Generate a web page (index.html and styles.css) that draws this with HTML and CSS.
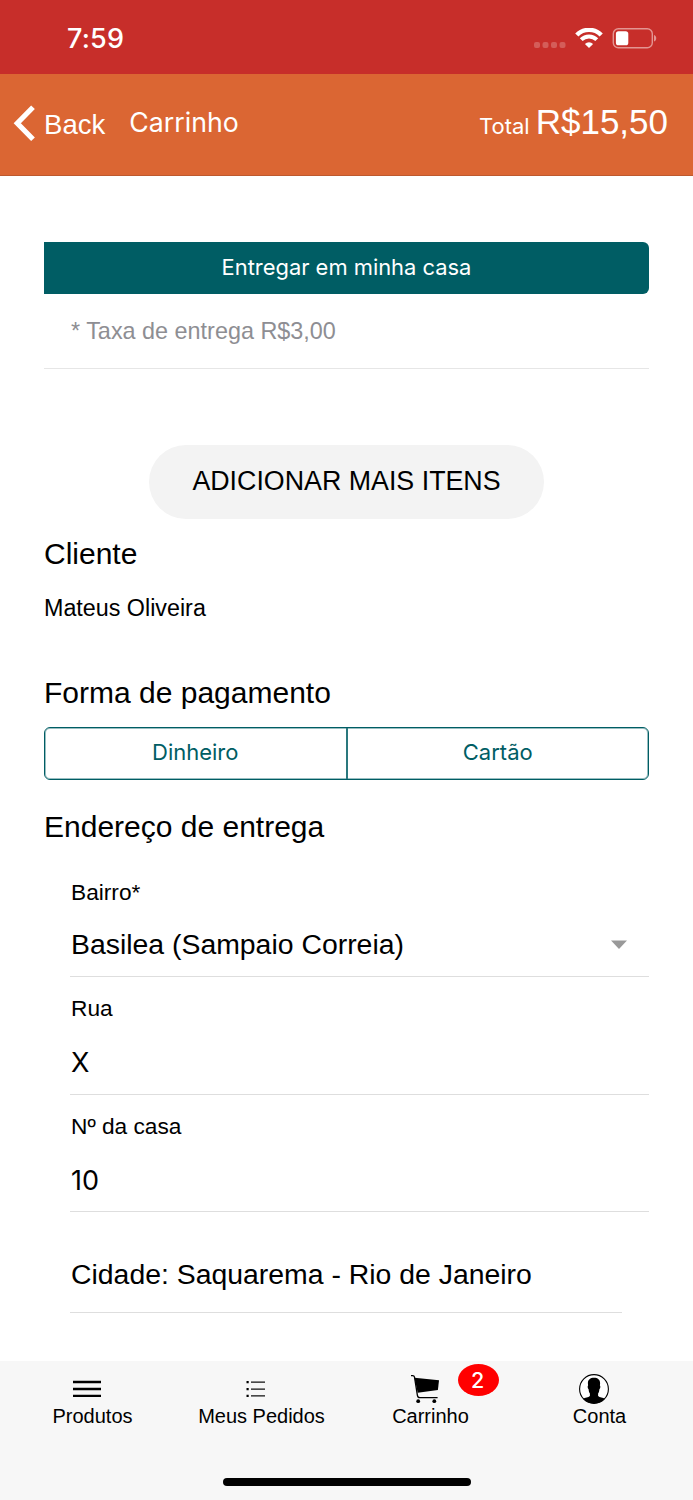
FILE: index.html
```html
<!DOCTYPE html>
<html lang="pt-BR">
<head>
    <meta charset="UTF-8">
    <meta name="viewport" content="width=device-width, initial-scale=1.0">
    <title>Carrinho</title>
    <link rel="stylesheet" href="styles.css">
</head>
<body>
    <!-- Status bar -->
    <div class="status-bar">
        <span class="time">7:59</span>
        <div class="status-icons">
            <svg class="signal" width="32" height="6" viewBox="0 0 32 6">
                <rect x="0" y="0" width="6" height="6" rx="2"/>
                <rect x="8.5" y="0" width="6" height="6" rx="2"/>
                <rect x="17" y="0" width="6" height="6" rx="2"/>
                <rect x="25.5" y="0" width="6" height="6" rx="2"/>
            </svg>
            <svg class="wifi" width="28" height="20" viewBox="0 0 28 20">
                <path d="M1.8 7A17 17 0 0 1 26.2 7" fill="none" stroke="#fff" stroke-width="4.4"/>
                <path d="M6.2 11.7A11 11 0 0 1 21.8 11.7" fill="none" stroke="#fff" stroke-width="4"/>
                <path d="M14 20L9.9 15.9A6.2 6.2 0 0 1 18.1 15.9Z" fill="#fff"/>
            </svg>
            <svg class="battery" width="45" height="21" viewBox="0 0 45 21">
                <rect x="1.3" y="0.8" width="39" height="19" rx="5" fill="none" stroke="#e39592" stroke-width="1.4"/>
                <rect x="3.9" y="3.3" width="12.4" height="14" rx="2.6" fill="#fff"/>
                <path d="M42 7C45 8 45 12.6 42 13.6Z" fill="#e39592"/>
            </svg>
        </div>
    </div>

    <!-- Header -->
    <div class="navbar">
        <button class="back-btn">
            <svg width="22" height="36" viewBox="0 0 22 36">
                <path d="M20 2.2L4.3 18.2L20 34.2" fill="none" stroke="#fff" stroke-width="5.2"/>
            </svg>
            <span class="back-text">Back</span>
        </button>
        <span class="nav-title">Carrinho</span>
        <div class="total"><span class="total-label">Total</span><span class="total-value">R$15,50</span></div>
    </div>

    <div class="content">
        <button class="deliver-btn"><span>Entregar em minha casa</span></button>
        <p class="fee"><span>* Taxa de entrega R$3,00</span></p>

        <button class="add-btn"><span>ADICIONAR MAIS ITENS</span></button>

        <h2 class="client-title"><span>Cliente</span></h2>
        <p class="client-name"><span>Mateus Oliveira</span></p>

        <h2 class="payment-title"><span>Forma de pagamento</span></h2>
        <div class="payment">
            <button class="payment-btn"><span>Dinheiro</span></button>
            <button class="payment-btn"><span>Cartão</span></button>
        </div>

        <h2 class="address-title"><span>Endereço de entrega</span></h2>
        <div class="address">
            <div class="field">
                <span class="field-label">Bairro*</span>
                <div class="field-value">
                    <span>Basilea (Sampaio Correia)</span>
                    <svg width="16" height="9" viewBox="0 0 16 9"><path d="M0 .5H16L8 9Z" fill="#999"/></svg>
                </div>
            </div>
            <div class="field">
                <span class="field-label">Rua</span>
                <div class="field-value field-input"><span>X</span></div>
            </div>
            <div class="field">
                <span class="field-label">Nº da casa</span>
                <div class="field-value field-input"><span>10</span></div>
            </div>
            <p class="city"><span>Cidade: Saquarema - Rio de Janeiro</span></p>
        </div>
    </div>

    <!-- Bottom tabs -->
    <div class="tab-bar">
        <div class="tabs">
            <div class="tab tab-products">
                <svg width="28" height="30" viewBox="0 0 28 30">
                    <path d="M0 8H28M0 15H28M0 21.8H28" stroke="#000" stroke-width="2.3"/>
                </svg>
                <span>Produtos</span>
            </div>
            <div class="tab tab-orders">
                <svg width="20" height="30" viewBox="0 0 20 30">
                    <path d="M5 8.2H19M5 15.2H19M5 21.9H19" stroke="#111" stroke-width="1.3"/>
                    <path d="M.5 8.2H2.7M.5 15.2H2.7M.5 21.9H2.7" stroke="#000" stroke-width="2.2"/>
                </svg>
                <span>Meus Pedidos</span>
            </div>
            <div class="tab tab-cart">
                <div class="cart-icon">
                    <svg width="28" height="30" viewBox="0 0 28 30">
                        <path d="M0 1.6H1.7Q3.2 1.6 3.5 3.2L6.4 21.3Q6.8 23.6 8.8 23.6H26.6" fill="none" stroke="#000" stroke-width="1.3"/>
                        <path d="M3.5 3.7L28 6.3L26.9 16L6.7 18.7Z"/>
                        <circle cx="7.2" cy="27.2" r="1.9"/>
                        <circle cx="23.3" cy="27.2" r="1.9"/>
                    </svg>
                    <span class="badge">2</span>
                </div>
                <span>Carrinho</span>
            </div>
            <div class="tab tab-account">
                <svg width="30" height="30" viewBox="0 0 30 30">
                    <circle cx="15" cy="15" r="14.4" fill="#fff" stroke="#000" stroke-width="1.1"/>
                    <path d="M15 3.8C18.8 3.8 21.2 5.8 21.1 9.5L20.9 11.6C21.7 12 21.3 15 20.4 15.3C20.2 17.4 19.8 18.8 19.1 19.6V22C20.6 23.4 24 23.8 26 24.7C20.5 31 9.5 31 4 24.7C6 23.8 9.4 23.4 10.9 22V19.6C10.2 18.8 9.8 17.4 9.6 15.3C8.7 15 8.3 12 9.1 11.6L8.9 9.5C8.8 5.8 11.2 3.8 15 3.8Z"/>
                </svg>
                <span>Conta</span>
            </div>
        </div>
        <div class="home-indicator"></div>
    </div>
</body>
</html>
```
FILE: styles.css
```css
* {
    box-sizing: border-box;
}

body {
    margin: 0;
    height: 1500px;
    display: flex;
    flex-direction: column;
    background: #fff;
    color: #000;
    font-family: "Liberation Sans", Arial, sans-serif;
    white-space: nowrap;
}

h2, p {
    margin: 0;
    font-weight: normal;
}

button {
    border: none;
    padding: 0;
    margin: 0;
    background: none;
    font-family: inherit;
    cursor: pointer;
}

svg {
    display: block;
    flex-shrink: 0;
}

/* Status bar */
.status-bar {
    height: 74px;
    display: flex;
    justify-content: space-between;
    padding: 0 36px 0 67px;
    background: #c72e2a;
    color: #fff;
}

.time {
    font-family: Inter, sans-serif;
    font-size: 27px;
    font-weight: 500;
    line-height: 77px;
    letter-spacing: 0.2px;
}

.status-icons {
    display: flex;
    align-items: flex-start;
    padding-top: 28px;
}

.signal {
    margin: 14px 9px 0 0;
    fill: #d45d59;
}

.wifi {
    margin-right: 9px;
}

/* Header */
.navbar {
    height: 102px;
    display: flex;
    padding: 0 25px 0 13px;
    background: #db6633;
    border-bottom: 1px solid #bd592e;
    color: #fff;
}

.back-btn {
    display: flex;
    align-items: flex-start;
    color: #fff;
}

.back-btn svg {
    margin: 31px 9px 0 0;
}

.back-text {
    font-size: 27.6px;
    line-height: 101px;
}

.nav-title {
    margin-left: 24px;
    font-family: Inter, sans-serif;
    font-size: 26.7px;
    line-height: 97px;
}

.total {
    margin-left: auto;
    line-height: 95px;
}

.total-label {
    margin-right: 6px;
    font-family: Inter, sans-serif;
    font-size: 22px;
}

.total-value {
    font-size: 35px;
}

/* Cart content */
.content {
    flex: 1;
    display: flex;
    flex-direction: column;
    padding: 66px 44px 0;
}

.deliver-btn {
    height: 52px;
    padding-bottom: 2px;
    border-radius: 0 6px 6px 0;
    background: #005d64;
    color: #fff;
    font-family: Inter, sans-serif;
    font-size: 21.9px;
}

.fee {
    height: 75px;
    padding-left: 27px;
    border-bottom: 1px solid #e6e6e6;
    color: #8e8e93;
    font-size: 23.4px;
    line-height: 75px;
}

.add-btn {
    align-self: center;
    width: 395px;
    height: 74px;
    margin-top: 76px;
    padding-bottom: 2px;
    border-radius: 37px;
    background: #f3f3f3;
    font-size: 26.8px;
}

h2 {
    font-size: 30px;
    line-height: 40px;
}

.client-title {
    margin-top: 15px;
}

.client-name {
    margin-top: 14px;
    font-size: 23.3px;
    line-height: 40px;
}

.payment-title {
    margin-top: 45px;
}

.payment {
    display: flex;
    height: 53px;
    margin-top: 14px;
    border: 1px solid #005d64;
    border-radius: 6px;
    box-shadow: inset 0 0 0 1px rgba(0, 93, 100, 0.4);
}

.payment-btn {
    flex: 1;
    padding-bottom: 3px;
    color: #005d64;
    font-family: Inter, sans-serif;
    font-size: 22px;
}

.payment-btn + .payment-btn {
    border-left: 2px solid #2a787e;
}

.address-title {
    margin-top: 27px;
}

/* Address form */
.address {
    padding-left: 26px;
}

.field {
    height: 118px;
    padding: 16px 0 0 1px;
    border-bottom: 1px solid #dedede;
}

.field:first-child {
    height: 130px;
    padding-top: 30px;
}

.field:nth-child(3) {
    height: 117px;
}

.field-label {
    display: block;
    font-size: 22.7px;
    line-height: 30px;
}

.field-value {
    display: flex;
    justify-content: space-between;
    align-items: center;
    padding-right: 22px;
    font-size: 28.4px;
    line-height: 75px;
}

.field-input {
    font-family: Inter, sans-serif;
    font-size: 27px;
    line-height: 79px;
}

.city {
    height: 101px;
    margin-right: 27px;
    padding-left: 1px;
    border-bottom: 1px solid #dedede;
    font-size: 28.4px;
    line-height: 124px;
}

/* Bottom tabs */
.tab-bar {
    height: 139px;
    display: flex;
    flex-direction: column;
    align-items: center;
    background: #f7f7f7;
}

.tabs {
    width: 100%;
    height: 117px;
    display: grid;
    grid-template-columns: repeat(4, 169px);
    padding: 13px 0 0 8px;
}

.tab {
    display: flex;
    flex-direction: column;
    align-items: center;
    font-size: 20px;
    line-height: 24px;
}

.tab > svg,
.cart-icon {
    margin-right: 11px;
}

.cart-icon {
    position: relative;
}

.badge {
    position: absolute;
    left: 47px;
    top: -10px;
    width: 41px;
    height: 32px;
    padding-right: 2px;
    border-radius: 50%;
    background: #f00;
    color: #fff;
    font-family: Inter, sans-serif;
    font-size: 21.5px;
    font-weight: 500;
    line-height: 32px;
    text-align: center;
}

.home-indicator {
    width: 248px;
    height: 8px;
    border-radius: 4px;
    background: #000;
}
```
